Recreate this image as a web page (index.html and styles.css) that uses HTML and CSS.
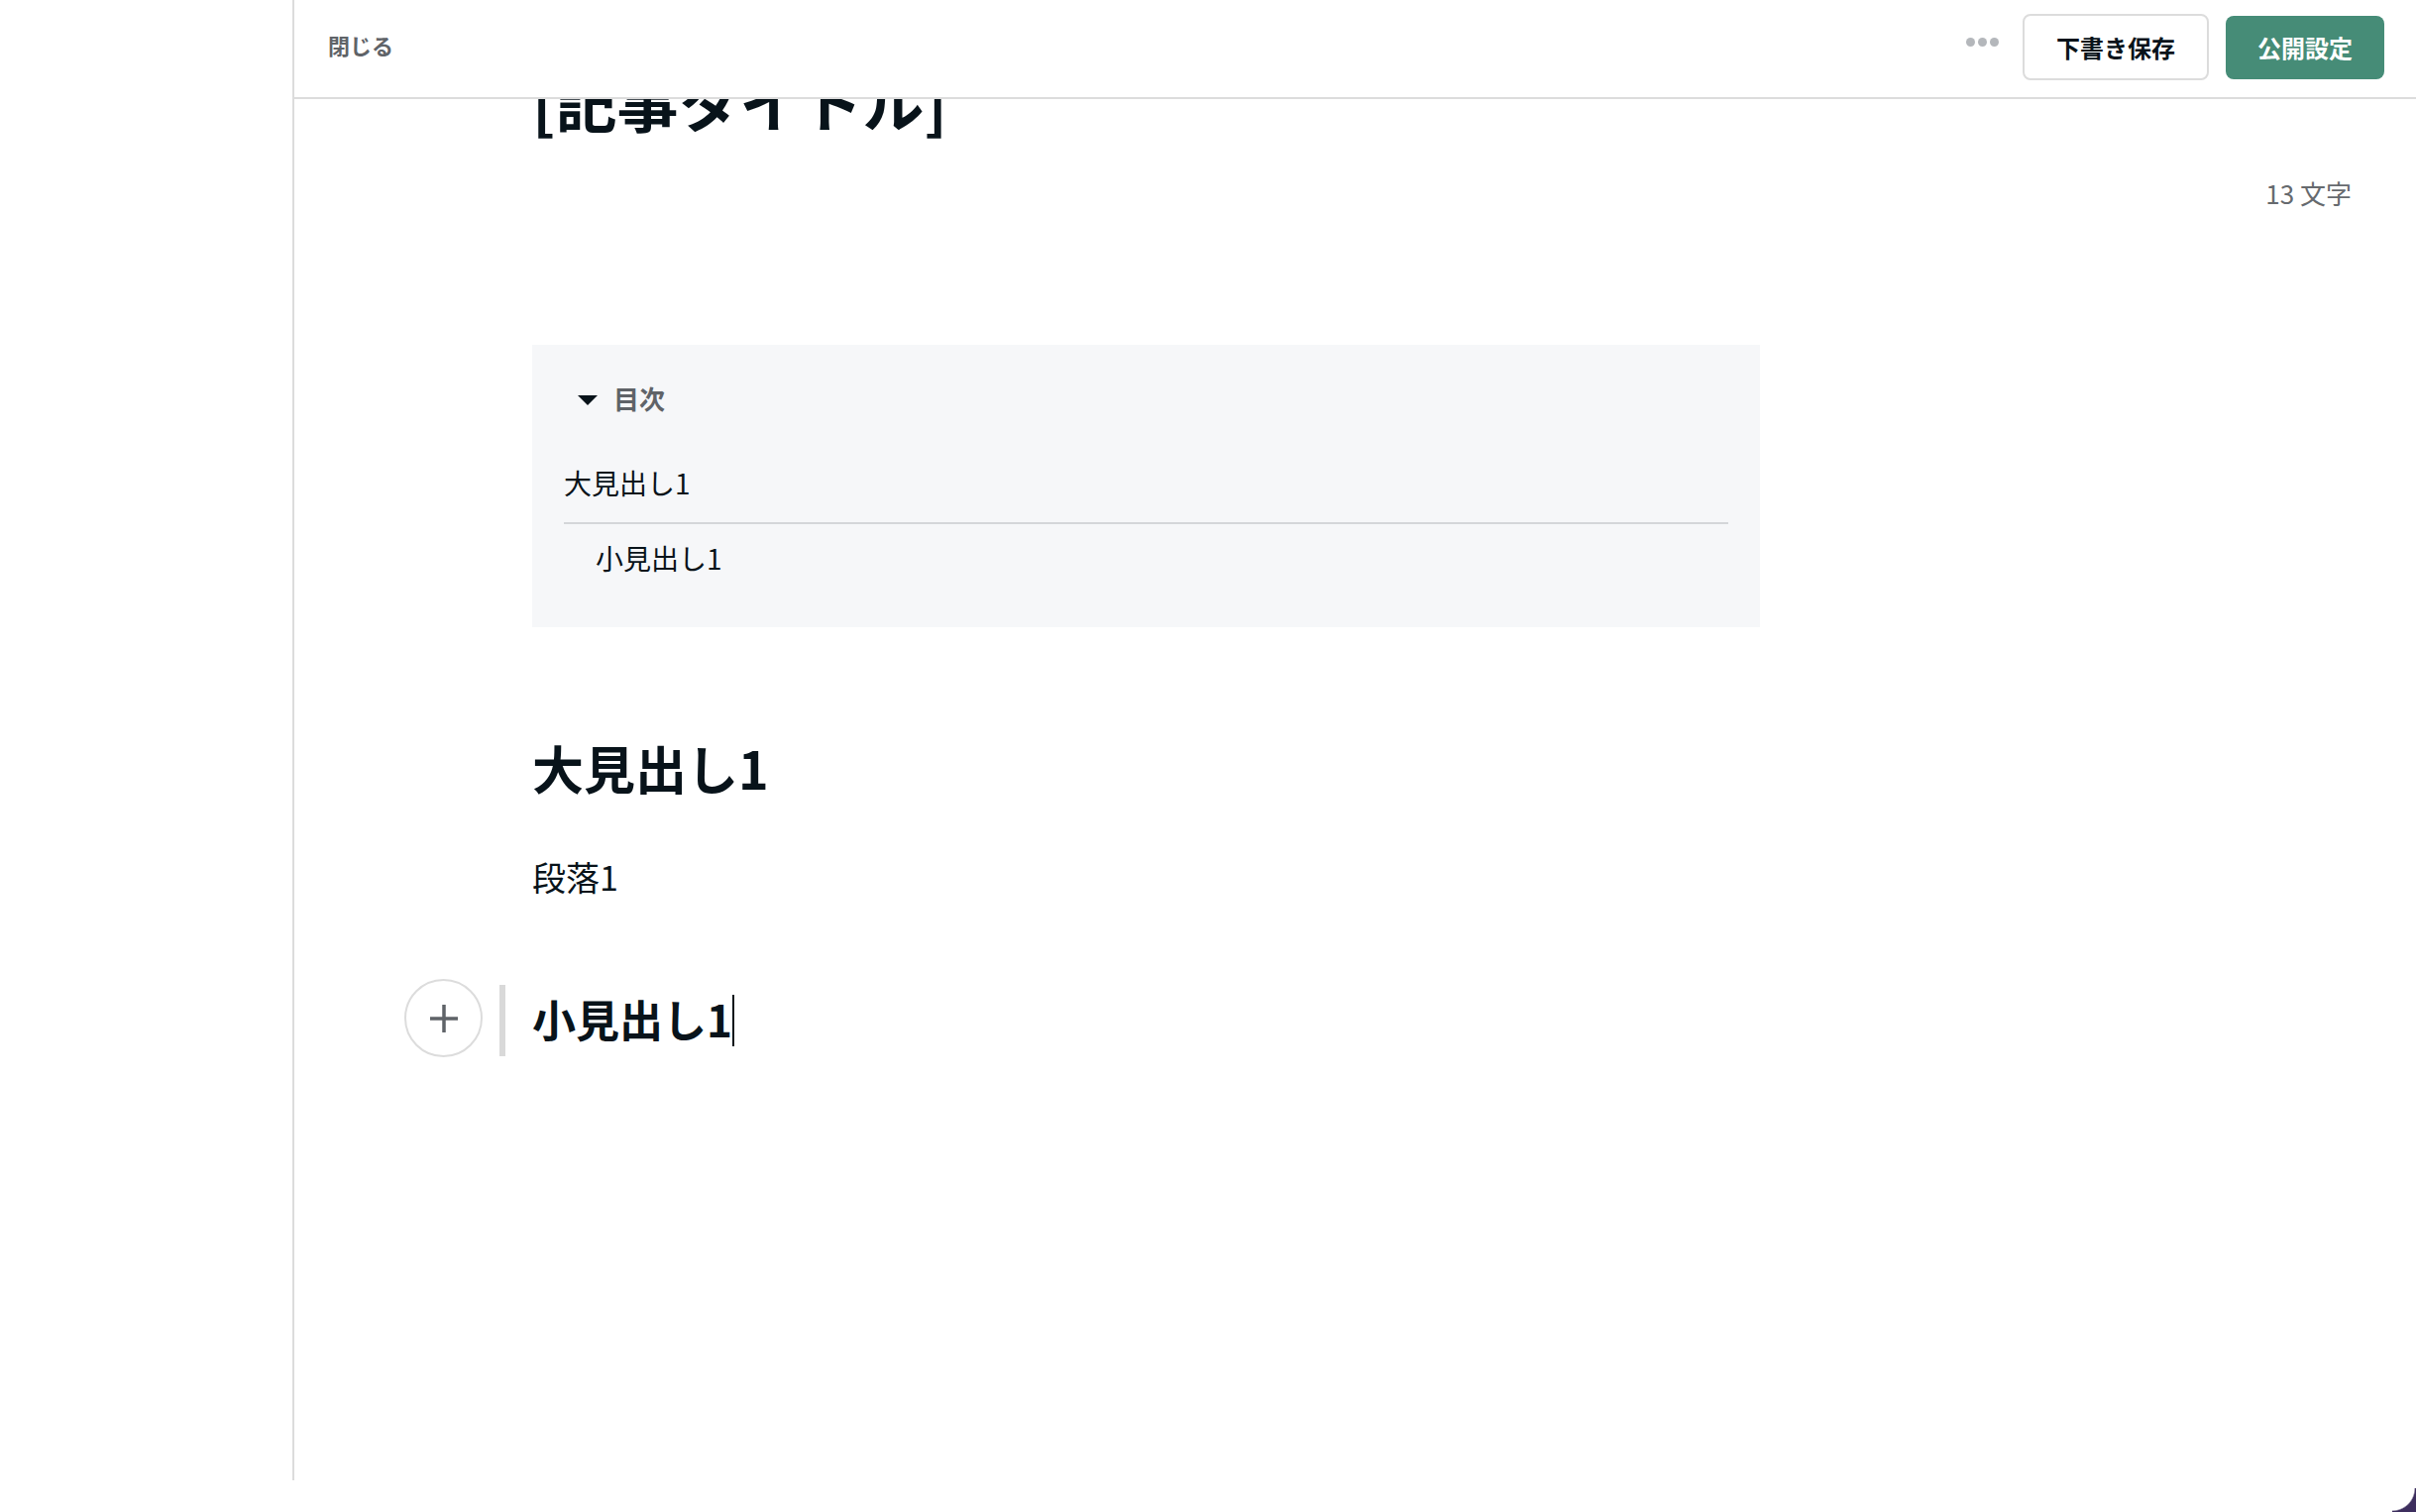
FILE: index.html
```html
<!DOCTYPE html>
<html lang="ja">
<head>
<meta charset="utf-8">
<title>記事エディタ</title>
<link rel="stylesheet" href="styles.css">
</head>
<body>
<div class="app">
  <aside class="sidebar"></aside>
  <main class="editor">
    <header class="topbar">
      <button class="close-btn" type="button">閉じる</button>
      <div class="actions">
        <span class="more" aria-label="その他"><i></i><i></i><i></i></span>
        <button class="btn btn-draft" type="button">下書き保存</button>
        <button class="btn btn-publish" type="button">公開設定</button>
      </div>
    </header>
    <div class="viewport">
      <div class="doc">
        <div class="doc-main">
          <h1 class="title">[記事タイトル]</h1>
          <nav class="toc">
            <div class="toc-summary">
              <svg class="toc-arrow" width="20" height="10" viewBox="0 0 20 10"><path d="M0 0H20L10 10Z" fill="#08131a"/></svg>
              <span>目次</span>
            </div>
            <ul class="toc-list">
              <li class="toc-item">大見出し1</li>
              <li class="toc-item toc-sub">小見出し1</li>
            </ul>
          </nav>
          <h2 class="h-large">大見出し1</h2>
          <p class="para">段落1</p>
          <div class="block-active">
            <button class="add-btn" type="button" aria-label="追加">
              <svg width="28" height="28" viewBox="0 0 28 28"><path d="M14 0V28M0 14H28" stroke="#5f6368" stroke-width="3.5" fill="none"/></svg>
            </button>
            <span class="block-bar"></span>
            <h3 class="h-small">小見出し1<span class="caret"></span></h3>
          </div>
        </div>
        <div class="doc-side">
          <span class="counter">13 文字</span>
        </div>
      </div>
    </div>
  </main>
</div>
<div class="screen-corner"></div>
</body>
</html>
```
FILE: styles.css
```css
html, body {
  margin: 0;
  padding: 0;
  background: #fff;
}
body {
  width: 2438px;
  height: 1526px;
  overflow: hidden;
  position: relative;
  font-family: "Noto Sans CJK JP", "Noto Sans", sans-serif;
  color: #08131a;
}
.app {
  display: flex;
  height: 1494px;
}
.sidebar {
  flex: none;
  width: 295px;
  border-right: 2px solid #dcdcdc;
}
.editor {
  flex: 1;
  min-width: 0;
  display: flex;
  flex-direction: column;
}
.topbar {
  flex: none;
  box-sizing: border-box;
  height: 100px;
  padding: 0 32px 3px 34px;
  border-bottom: 2px solid #dcdcdc;
  display: flex;
  align-items: center;
  justify-content: space-between;
  background: #fff;
}
.close-btn {
  border: 0;
  background: none;
  padding: 0;
  margin-bottom: 5px;
  font: inherit;
  font-size: 22px;
  font-weight: 700;
  color: #5f6368;
  line-height: 32px;
}
.actions {
  display: flex;
  align-items: center;
}
.more {
  display: flex;
  gap: 3px;
  margin-right: 24px;
  margin-bottom: 11px;
}
.more i {
  display: block;
  width: 9px;
  height: 9px;
  border-radius: 50%;
  background: #b4b7bb;
}
.btn {
  box-sizing: border-box;
  font: inherit;
  font-size: 24px;
  font-weight: 700;
  line-height: 32px;
  padding: 0 32px;
  border-radius: 8px;
}
.btn-draft {
  height: 67px;
  border: 2px solid #dcdcdc;
  background: #fff;
  color: #08131a;
}
.btn-publish {
  height: 64px;
  margin-left: 17px;
  border: 0;
  background: #468c77;
  color: #fff;
}
.viewport {
  flex: 1;
  overflow: hidden;
}
.doc {
  display: flex;
  margin-top: -44.5px;
}
.doc-main {
  flex: none;
  width: 1239px;
  padding-left: 240px;
}
.doc-side {
  flex: 1;
  text-align: right;
  padding: 119px 65px 0 0;
}
.counter {
  font-size: 26px;
  line-height: 40px;
  color: #666a6e;
}
.title {
  margin: 0;
  font-size: 62px;
  line-height: 93px;
  font-weight: 700;
}
.toc {
  margin-top: 199.5px;
  background: #f6f7f9;
  padding: 33px 32px 30px;
}
.toc-summary {
  display: flex;
  align-items: center;
  height: 40px;
  font-size: 26px;
  font-weight: 700;
  color: #5f6368;
}
.toc-arrow {
  margin-left: 14px;
  margin-right: 16px;
  margin-top: 5px;
}
.toc-list {
  list-style: none;
  margin: 32px 0 0;
  padding: 0;
}
.toc-item {
  font-size: 28px;
  line-height: 42px;
  padding: 13px 0 19px;
}
.toc-item:first-child {
  border-bottom: 2px solid #d4d6d9;
}
.toc-sub {
  padding-left: 32px;
}
.h-large {
  margin: 102.5px 0 0;
  font-size: 52px;
  line-height: 78px;
  font-weight: 700;
}
.para {
  margin: 43.5px 0 0;
  font-size: 34px;
  line-height: 56px;
}
.block-active {
  display: flex;
  align-items: center;
  height: 79px;
  margin: 75px 0 0 -129px;
}
.add-btn {
  flex: none;
  box-sizing: border-box;
  width: 79px;
  height: 79px;
  border-radius: 50%;
  border: 2px solid #dcdcdc;
  background: #fff;
  padding: 0;
  display: flex;
  align-items: center;
  justify-content: center;
}
.block-bar {
  flex: none;
  width: 6px;
  height: 72px;
  margin: 5px 0 0 17px;
  background: #d9d9d9;
}
.h-small {
  margin: 0 0 0 27px;
  font-size: 44px;
  line-height: 66px;
  font-weight: 700;
}
.caret {
  display: inline-block;
  width: 2px;
  height: 52px;
  background: #08131a;
  vertical-align: -9px;
}
.screen-corner {
  position: absolute;
  right: 0;
  bottom: 0;
  width: 24px;
  height: 24px;
  background: radial-gradient(circle at 0 0, #fff 22px, #3d2e5e 23.5px);
}
```
